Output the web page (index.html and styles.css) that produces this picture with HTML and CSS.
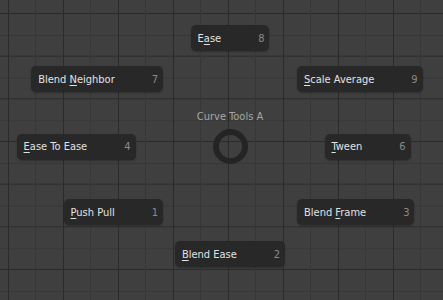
FILE: index.html
```html
<!DOCTYPE html>
<html lang="en">

<head>
    <meta charset="UTF-8">
    <meta name="viewport" content="width=device-width, initial-scale=1.0">
    <title>Curve Tools A</title>
    <link rel="stylesheet" href="styles.css">
</head>

<body>
    <div class="pie">
        <div class="pie-row pie-top">
            <div class="pie-item"><span class="label">E<u>a</u>se</span><span class="key">8</span></div>
        </div>

        <div class="pie-row pie-pair pie-upper">
            <div class="pie-item"><span class="label">Blend <u>N</u>eighbor</span><span class="key">7</span></div>
            <div class="pie-item"><span class="label"><u>S</u>cale Average</span><span class="key">9</span></div>
        </div>

        <div class="pie-title">Curve Tools A</div>

        <div class="pie-row pie-middle">
            <div class="pie-item"><span class="label"><u>E</u>ase To Ease</span><span class="key">4</span></div>
            <div class="pie-center"></div>
            <div class="pie-item"><span class="label"><u>T</u>ween</span><span class="key">6</span></div>
        </div>

        <div class="pie-row pie-pair pie-lower">
            <div class="pie-item"><span class="label"><u>P</u>ush Pull</span><span class="key">1</span></div>
            <div class="pie-item"><span class="label">Blend <u>F</u>rame</span><span class="key">3</span></div>
        </div>

        <div class="pie-row pie-bottom">
            <div class="pie-item"><span class="label"><u>B</u>lend Ease</span><span class="key">2</span></div>
        </div>
    </div>
</body>

</html>
```

FILE: styles.css
```css
* {
    margin: 0;
    padding: 0;
    box-sizing: border-box;
}

html,
body {
    height: 100%;
    overflow: hidden;
}

body {
    font-family: "DejaVu Sans Condensed", "DejaVu Sans", sans-serif;
    font-stretch: condensed;
    font-size: 11px;
    color: #e2e2e2;
    background-color: #3f3f3f;
    /* graph editor grid: major + minor lines, x and y scaled differently */
    background-image:
        linear-gradient(to right, #2b2b2b 1px, transparent 1px),
        linear-gradient(to right, #373737 1px, transparent 1px),
        linear-gradient(to bottom, #2b2b2b 1px, transparent 1px),
        linear-gradient(to bottom, #373737 1px, transparent 1px);
    background-size: 55px 100%, 55px 100%, 100% 42.67px, 100% 42.67px;
    background-position: 8px 0, 35px 0, 0 13px, 0 35px;
}

.pie {
    width: 460px;
    padding-top: 25px;
}

.pie-row {
    display: flex;
    justify-content: center;
}

.pie-pair {
    display: grid;
    grid-template-columns: 1fr 1fr;
    column-gap: 134px;
}

.pie-pair .pie-item:first-child {
    justify-self: end;
}

.pie-pair .pie-item:last-child {
    justify-self: start;
}

.pie-upper {
    margin-top: 15px;
}

.pie-title {
    margin-top: 18px;
    line-height: 14px;
    text-align: center;
    color: #a6a6a6;
}

.pie-middle {
    display: grid;
    grid-template-columns: 1fr 35px 1fr;
    column-gap: 77px;
    align-items: center;
    margin-top: 5px;
}

.pie-middle .pie-item:first-child {
    justify-self: end;
}

.pie-middle .pie-item:last-child {
    justify-self: start;
}

.pie-center {
    width: 35px;
    height: 35px;
    border: 6px solid #242424;
    border-radius: 50%;
}

.pie-lower {
    margin-top: 35px;
}

.pie-bottom {
    margin-top: 16px;
}

.pie-item {
    display: flex;
    align-items: center;
    height: 26px;
    padding: 0 5px 0 7px;
    background: #282828;
    border-radius: 5px;
    box-shadow: 0 1px 2px rgba(0, 0, 0, 0.25);
    white-space: nowrap;
}

.label u {
    text-decoration-thickness: 1px;
    text-underline-offset: 2px;
}

.key {
    margin-left: 37px;
    color: #8a8a8a;
}
```
